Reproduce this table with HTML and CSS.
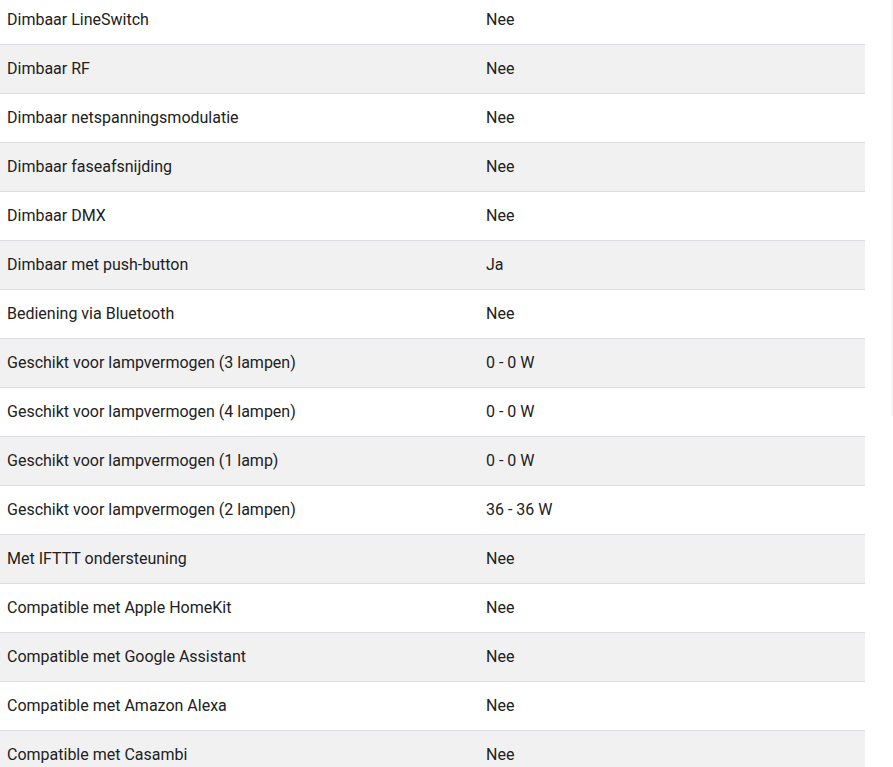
FILE: index.html
```html
<!DOCTYPE html>
<html lang="nl">
<head>
<meta charset="utf-8">
<title>Specificaties</title>
<link rel="stylesheet" href="styles.css">
</head>
<body>
<div class="page">
  <table class="specs">
    <tbody>
      <tr><td class="label">Dimbaar LineSwitch</td><td class="value">Nee</td></tr>
      <tr><td class="label">Dimbaar RF</td><td class="value">Nee</td></tr>
      <tr><td class="label">Dimbaar netspanningsmodulatie</td><td class="value">Nee</td></tr>
      <tr><td class="label">Dimbaar faseafsnijding</td><td class="value">Nee</td></tr>
      <tr><td class="label">Dimbaar DMX</td><td class="value">Nee</td></tr>
      <tr><td class="label">Dimbaar met push-button</td><td class="value">Ja</td></tr>
      <tr><td class="label">Bediening via Bluetooth</td><td class="value">Nee</td></tr>
      <tr><td class="label">Geschikt voor lampvermogen (3 lampen)</td><td class="value">0 - 0 W</td></tr>
      <tr><td class="label">Geschikt voor lampvermogen (4 lampen)</td><td class="value">0 - 0 W</td></tr>
      <tr><td class="label">Geschikt voor lampvermogen (1 lamp)</td><td class="value">0 - 0 W</td></tr>
      <tr><td class="label">Geschikt voor lampvermogen (2 lampen)</td><td class="value">36 - 36 W</td></tr>
      <tr><td class="label">Met IFTTT ondersteuning</td><td class="value">Nee</td></tr>
      <tr><td class="label">Compatible met Apple HomeKit</td><td class="value">Nee</td></tr>
      <tr><td class="label">Compatible met Google Assistant</td><td class="value">Nee</td></tr>
      <tr><td class="label">Compatible met Amazon Alexa</td><td class="value">Nee</td></tr>
      <tr><td class="label">Compatible met Casambi</td><td class="value">Nee</td></tr>
    </tbody>
  </table>
  <div class="edge"></div>
</div>
</body>
</html>
```
FILE: styles.css
```css
html, body {
  margin: 0;
  padding: 0;
  background: #ffffff;
  overflow: hidden;
}
body {
  font-family: Roboto, "Liberation Sans", Arial, sans-serif;
  font-size: 16px;
  color: #212121;
}
.page {
  position: relative;
  width: 893px;
  height: 767px;
  overflow: hidden;
}
.specs {
  width: 865px;
  border-collapse: collapse;
  margin-top: -5px;
  table-layout: fixed;
}
.specs tr {
  border-bottom: 1px solid #dcdce2;
}
.specs tr:nth-child(even) {
  background: #f1f1f1;
}
.specs td {
  height: 49px;
  padding: 1px 7px 0;
  vertical-align: middle;
  line-height: 20px;
  box-sizing: border-box;
}
.specs td.label {
  width: 479px;
}
.edge {
  position: absolute;
  top: 0;
  left: 891px;
  width: 2px;
  height: 416px;
  background: #f6f6f6;
}
```
